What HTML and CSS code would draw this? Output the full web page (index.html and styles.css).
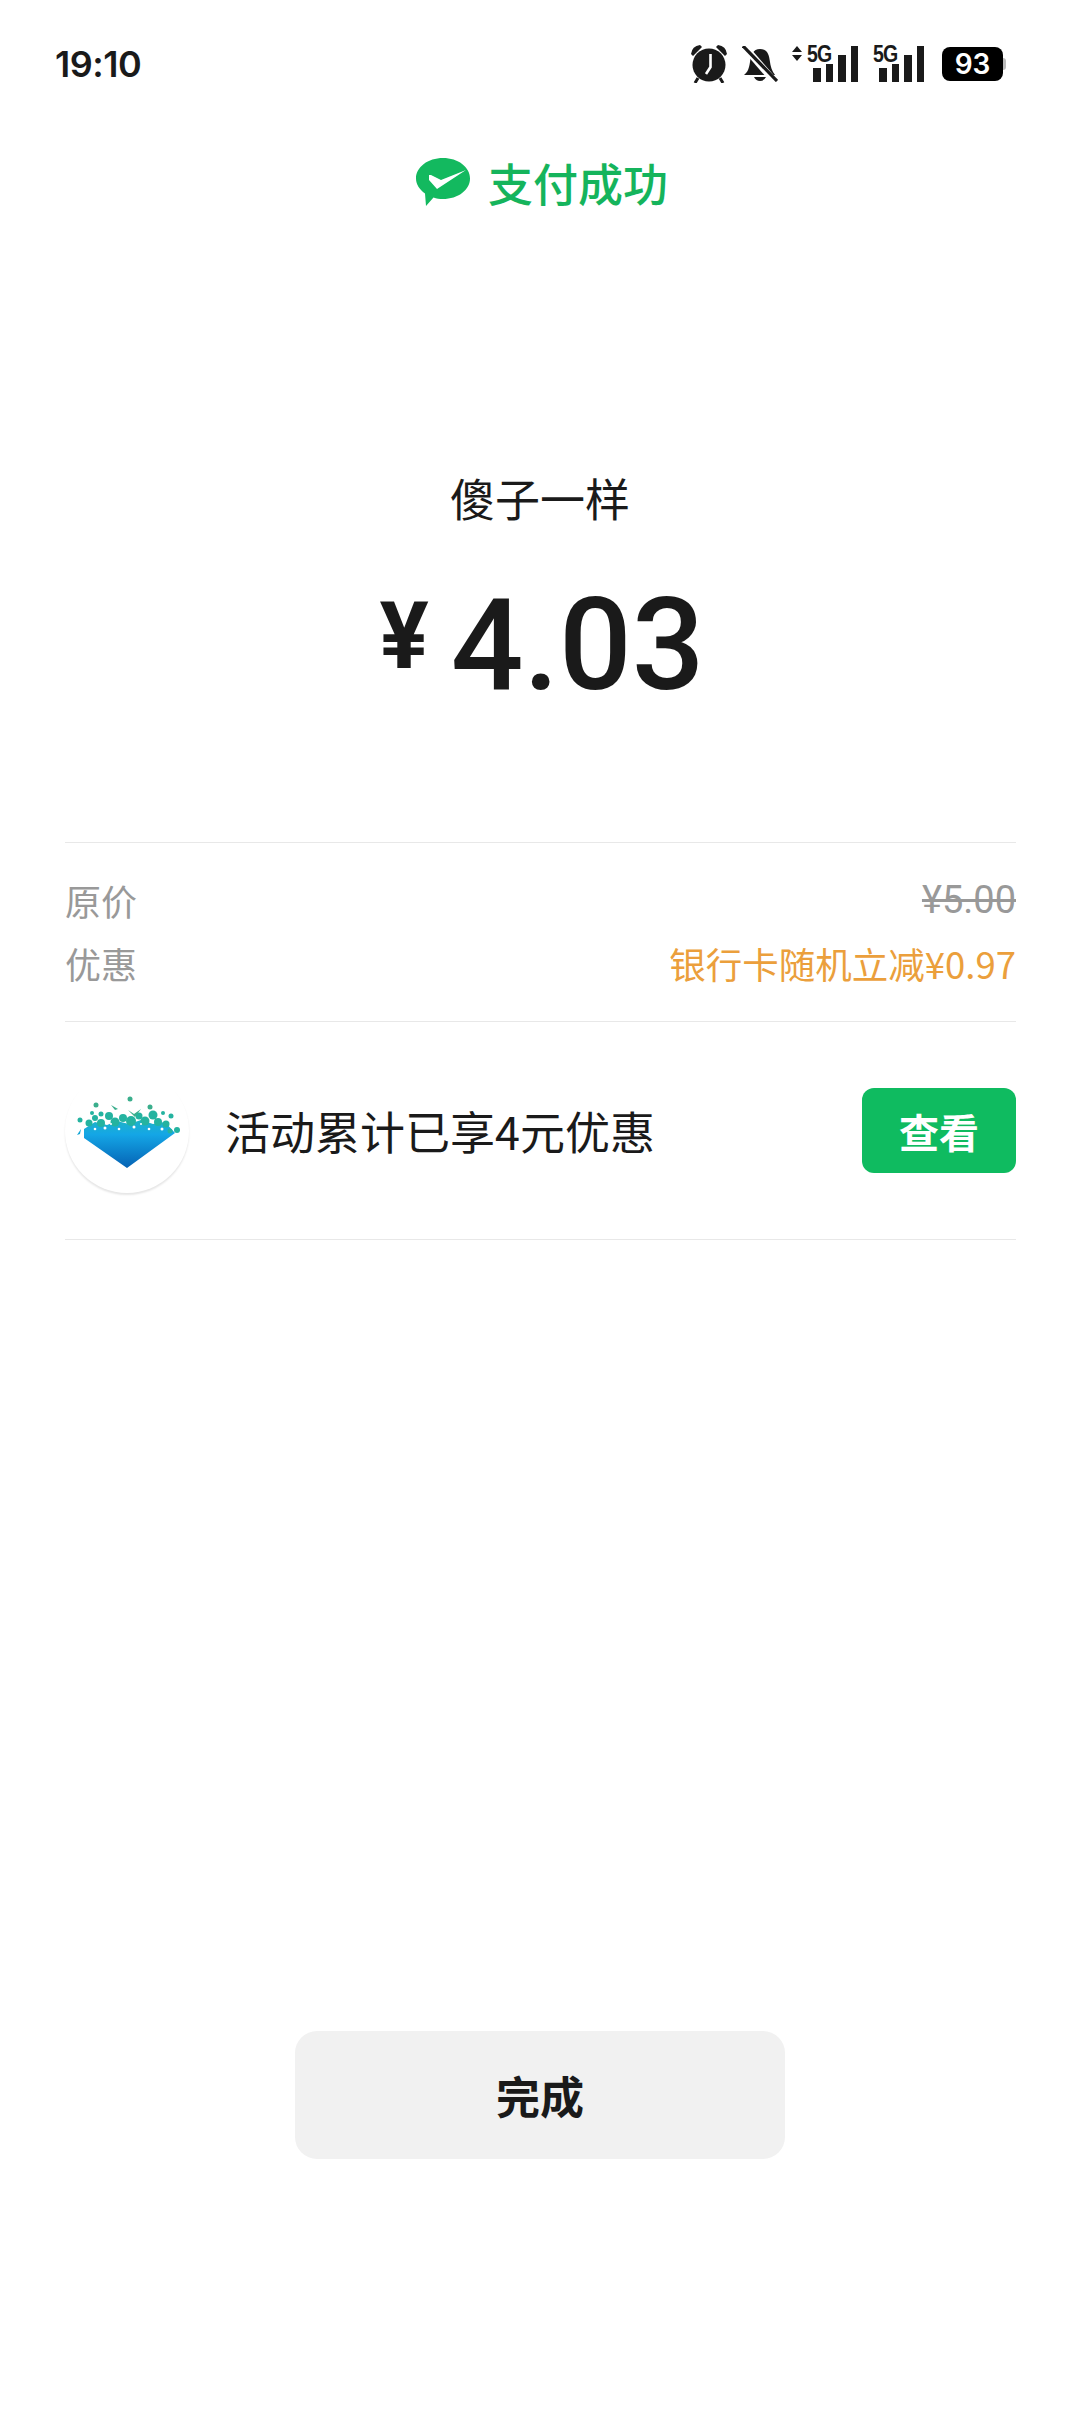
FILE: index.html
```html
<!DOCTYPE html>
<html lang="zh-CN">
<head>
  <meta charset="UTF-8">
  <meta name="viewport" content="width=device-width, initial-scale=1.0">
  <title>支付成功</title>
  <link rel="stylesheet" href="styles.css">
</head>
<body>

<div class="page">
  <div class="status-bar">
    <div class="time">19:10</div>
    <div class="status-icons">
      <svg class="icon-alarm" width="36" height="38" viewBox="0 0 36 38">
        <circle cx="18" cy="20" r="16.500" fill="#1a1a1a"/>
        <path d="M0 9 Q1 1 9 0 L11 2 L2 11 Z M36 9 Q35 1 27 0 L25 2 L34 11 Z" fill="#1a1a1a"/>
        <path d="M7 33 L4 38 M29 33 L32 38" stroke="#1a1a1a" stroke-width="3"/>
        <path d="M19.500 9 V22 L15 29" stroke="#fff" stroke-width="2.600" fill="none"/>
      </svg>
      <svg class="icon-bell" width="36" height="36" viewBox="0 0 36 36">
        <path d="M18 3 C26 3 27 9 28 16 C29 23 31 26 33 29 H2 C6 26 7 22 8 16 C9 9 11 3 18 3 Z" fill="#1a1a1a"/>
        <path d="M12 31 H24 Q22 35 18 35 Q14 35 12 31 Z" fill="#1a1a1a"/>
        <path d="M0 -2 L33 36" stroke="#fff" stroke-width="7"/>
        <path d="M1 0 L35 35" stroke="#1a1a1a" stroke-width="3.200"/>
      </svg>
      <div class="signal signal-first">
        <svg class="updown" width="10" height="15" viewBox="0 0 10 15">
          <path d="M5 0 L10 6 H0 Z M0 9 H10 L5 15 Z" fill="#1a1a1a"/>
        </svg>
        <span class="net">5G</span>
        <div class="bars"><i class="b1"></i><i class="b2"></i><i class="b3"></i><i class="b4"></i></div>
      </div>
      <div class="signal">
        <span class="net">5G</span>
        <div class="bars"><i class="b1"></i><i class="b2"></i><i class="b3"></i><i class="b4"></i></div>
      </div>
      <div class="battery"><span>93</span></div>
    </div>
  </div>

  <div class="result-title">
    <svg width="54" height="48" viewBox="0 0 54 48">
      <path d="M27 0 C42 0 54 9 54 20.500 C54 32 42 41 27 41 C23.500 41 20.500 40.500 17.500 39.500 L10 48 L9 35.500 C3.500 31.500 0 26.500 0 20.500 C0 9 12 0 27 0 Z" fill="#13b95f"/>
      <path d="M13 17 L13 22 L21 31 L50 12 L25 22 L15 17 Z" fill="#fff"/>
    </svg>
    <span>支付成功</span>
  </div>

  <div class="payee">傻子一样</div>
  <div class="amount"><span class="yen">¥</span><span class="num">4.03</span></div>

  <div class="details">
    <div class="detail-row">
      <span class="label">原价</span>
      <span class="old-price">¥5.00</span>
    </div>
    <div class="detail-row">
      <span class="label">优惠</span>
      <span class="discount">银行卡随机立减¥0.97</span>
    </div>
  </div>

  <div class="promo">
    <div class="promo-logo">
      <svg width="124" height="124" viewBox="0 0 124 124">
        <defs>
          <linearGradient id="blue" x1="0" y1="0" x2="0" y2="1">
            <stop offset="0" stop-color="#1fb3c8"/>
            <stop offset="0.3" stop-color="#14a6e6"/>
            <stop offset="1" stop-color="#0562b4"/>
          </linearGradient>
        </defs>
        <path d="M19 60 L30 53 L42 56 L52 52 L64 55 L76 51 L88 55 L100 53 L110 64 L62 99 L19 69 Z" fill="url(#blue)"/>
        <g fill="#24b3a0">
          <circle cx="24" cy="54" r="3.500"/><circle cx="30" cy="49" r="3"/><circle cx="36" cy="54" r="4"/>
          <circle cx="44" cy="47" r="4"/><circle cx="50" cy="53" r="4.500"/><circle cx="58" cy="49" r="4"/>
          <circle cx="66" cy="52" r="5"/><circle cx="74" cy="47" r="3.500"/><circle cx="80" cy="52" r="4.500"/>
          <circle cx="88" cy="46" r="4.500"/><circle cx="93" cy="53" r="4"/><circle cx="101" cy="55" r="3.500"/>
          <circle cx="106" cy="47" r="2.500"/><circle cx="98" cy="44" r="2"/><circle cx="112" cy="61" r="3"/>
          <circle cx="105" cy="62" r="2.500"/><circle cx="15" cy="51" r="2.500"/><circle cx="27" cy="44" r="2"/>
          <circle cx="36" cy="45" r="2.500"/>
        </g>
        <g fill="#3aae8c">
          <circle cx="31" cy="36" r="2.500"/><circle cx="65" cy="30" r="2.500"/><circle cx="85" cy="38" r="2.500"/>
        </g>
        <path d="M46 36 L53 40 L50 41 Z M63 41 L69 45 L76 40 L70 48 Z" fill="#3aae8c"/>
        <path d="M12 66 L16 60 L15 65 Z" fill="#14a6d6"/>
        <g fill="#fff">
          <circle cx="40" cy="59" r="1.500"/><circle cx="54" cy="60" r="1.300"/><circle cx="69" cy="58" r="1.500"/>
          <circle cx="84" cy="60" r="1.300"/><circle cx="30" cy="60" r="1.300"/><circle cx="97" cy="60" r="1.500"/>
          <circle cx="76" cy="55" r="1"/><circle cx="46" cy="55" r="1"/>
        </g>
      </svg>
    </div>
    <div class="promo-text">活动累计已享4元优惠</div>
    <div class="view-btn">查看</div>
  </div>

  <div class="spacer"></div>
  <div class="done-btn">完成</div>
</div>

</body>
</html>
```

FILE: styles.css
```css
body {
  margin: 0;
  padding: 0;
  background-color: #ffffff;
  font-family: "Noto Sans CJK SC", "Noto Sans", sans-serif;
  color: #1a1a1a;
}

.page {
  width: 1080px;
  height: 2414px;
  display: flex;
  flex-direction: column;
  overflow: hidden;
}

/* Status bar */
.status-bar {
  box-sizing: border-box;
  height: 122px;
  padding: 5px 77px 0 55px;
  display: flex;
  justify-content: space-between;
  align-items: center;
  flex-shrink: 0;
}

.time {
  font-family: Inter, sans-serif;
  font-size: 36px;
  font-weight: 600;
  letter-spacing: -0.5px;
}

.status-icons {
  display: flex;
  align-items: center;
}

.icon-bell {
  margin-left: 15px;
}

.signal {
  position: relative;
  width: 45px;
  height: 36px;
  margin-left: 21px;
  display: flex;
  justify-content: flex-end;
  align-items: flex-end;
}

.signal-first {
  margin-left: 35px;
}

.updown {
  position: absolute;
  left: -21px;
  top: 0;
}

.net {
  position: absolute;
  left: -6px;
  top: -5px;
  font-family: "Liberation Sans", sans-serif;
  font-size: 23px;
  font-weight: 700;
  letter-spacing: -1px;
  transform: scaleX(0.85);
  transform-origin: left;
}

.bars {
  display: flex;
  align-items: flex-end;
  gap: 5px;
}

.bars i {
  display: block;
  width: 7.500px;
  background-color: #1a1a1a;
}

.bars .b1 { height: 14px; }
.bars .b2 { height: 18px; }
.bars .b3 { height: 27px; }
.bars .b4 { height: 36px; }

.battery {
  position: relative;
  width: 61px;
  height: 34px;
  margin-left: 18px;
  border-radius: 8px;
  background-color: #000000;
  color: #ffffff;
  display: flex;
  justify-content: center;
  align-items: center;
  font-family: Inter, sans-serif;
  font-size: 28px;
  font-weight: 600;
}

/* battery tip */
.battery::after {
  content: "";
  position: absolute;
  right: -3px;
  top: 11px;
  width: 3px;
  height: 12px;
  border-radius: 0 3px 3px 0;
  background-color: #bbbbbb;
}

/* Title */
.result-title {
  height: 120px;
  margin-left: 4px;
  display: flex;
  justify-content: center;
  align-items: center;
  gap: 18px;
  color: #15b45c;
  font-size: 45px;
  font-weight: 500;
  flex-shrink: 0;
}

.payee {
  margin-top: 226px;
  text-align: center;
  font-size: 45px;
  line-height: 60px;
}

.amount {
  margin-top: 42px;
  margin-left: 4px;
  height: 150px;
  display: flex;
  justify-content: center;
  align-items: center;
  gap: 22px;
}

.yen {
  font-family: Roboto, sans-serif;
  font-size: 92px;
  font-weight: 700;
  line-height: 1;
  margin-bottom: 16px;
}

.num {
  font-family: Roboto, sans-serif;
  font-size: 128px;
  font-weight: 500;
  line-height: 1;
}

/* Details */
.details {
  margin: 122px 64px 0 65px;
  padding: 33px 0 34px;
  border-top: 1px solid #e8e8e8;
  border-bottom: 1px solid #e8e8e8;
  display: flex;
  flex-direction: column;
  gap: 15px;
  font-size: 36px;
  flex-shrink: 0;
}

.detail-row {
  height: 48px;
  display: flex;
  justify-content: space-between;
  align-items: center;
}

.label {
  color: #999999;
}

.old-price {
  color: #999999;
  font-family: Roboto, sans-serif;
  font-size: 38px;
  text-decoration: line-through;
}

.discount {
  color: #eb9f3c;
  font-size: 36.500px;
}

/* Promo row */
.promo {
  margin: 0 64px 0 65px;
  height: 217px;
  border-bottom: 1px solid #e8e8e8;
  display: flex;
  align-items: center;
  flex-shrink: 0;
}

.promo-logo {
  width: 124px;
  height: 124px;
  border-radius: 50%;
  box-shadow: 0 2px 2px rgba(0, 0, 0, 0.1);
  flex-shrink: 0;
}

.promo-text {
  flex: 1;
  margin-left: 36px;
  font-size: 45px;
}

.view-btn {
  width: 154px;
  height: 85px;
  border-radius: 12px;
  background-color: #0fbb60;
  color: #ffffff;
  font-size: 40px;
  font-weight: 700;
  display: flex;
  justify-content: center;
  align-items: center;
}

.spacer {
  flex: 1;
}

.done-btn {
  align-self: center;
  margin-bottom: 255px;
  width: 490px;
  height: 128px;
  border-radius: 22px;
  background-color: #f1f1f1;
  font-size: 44px;
  font-weight: 700;
  display: flex;
  justify-content: center;
  align-items: center;
}
```
